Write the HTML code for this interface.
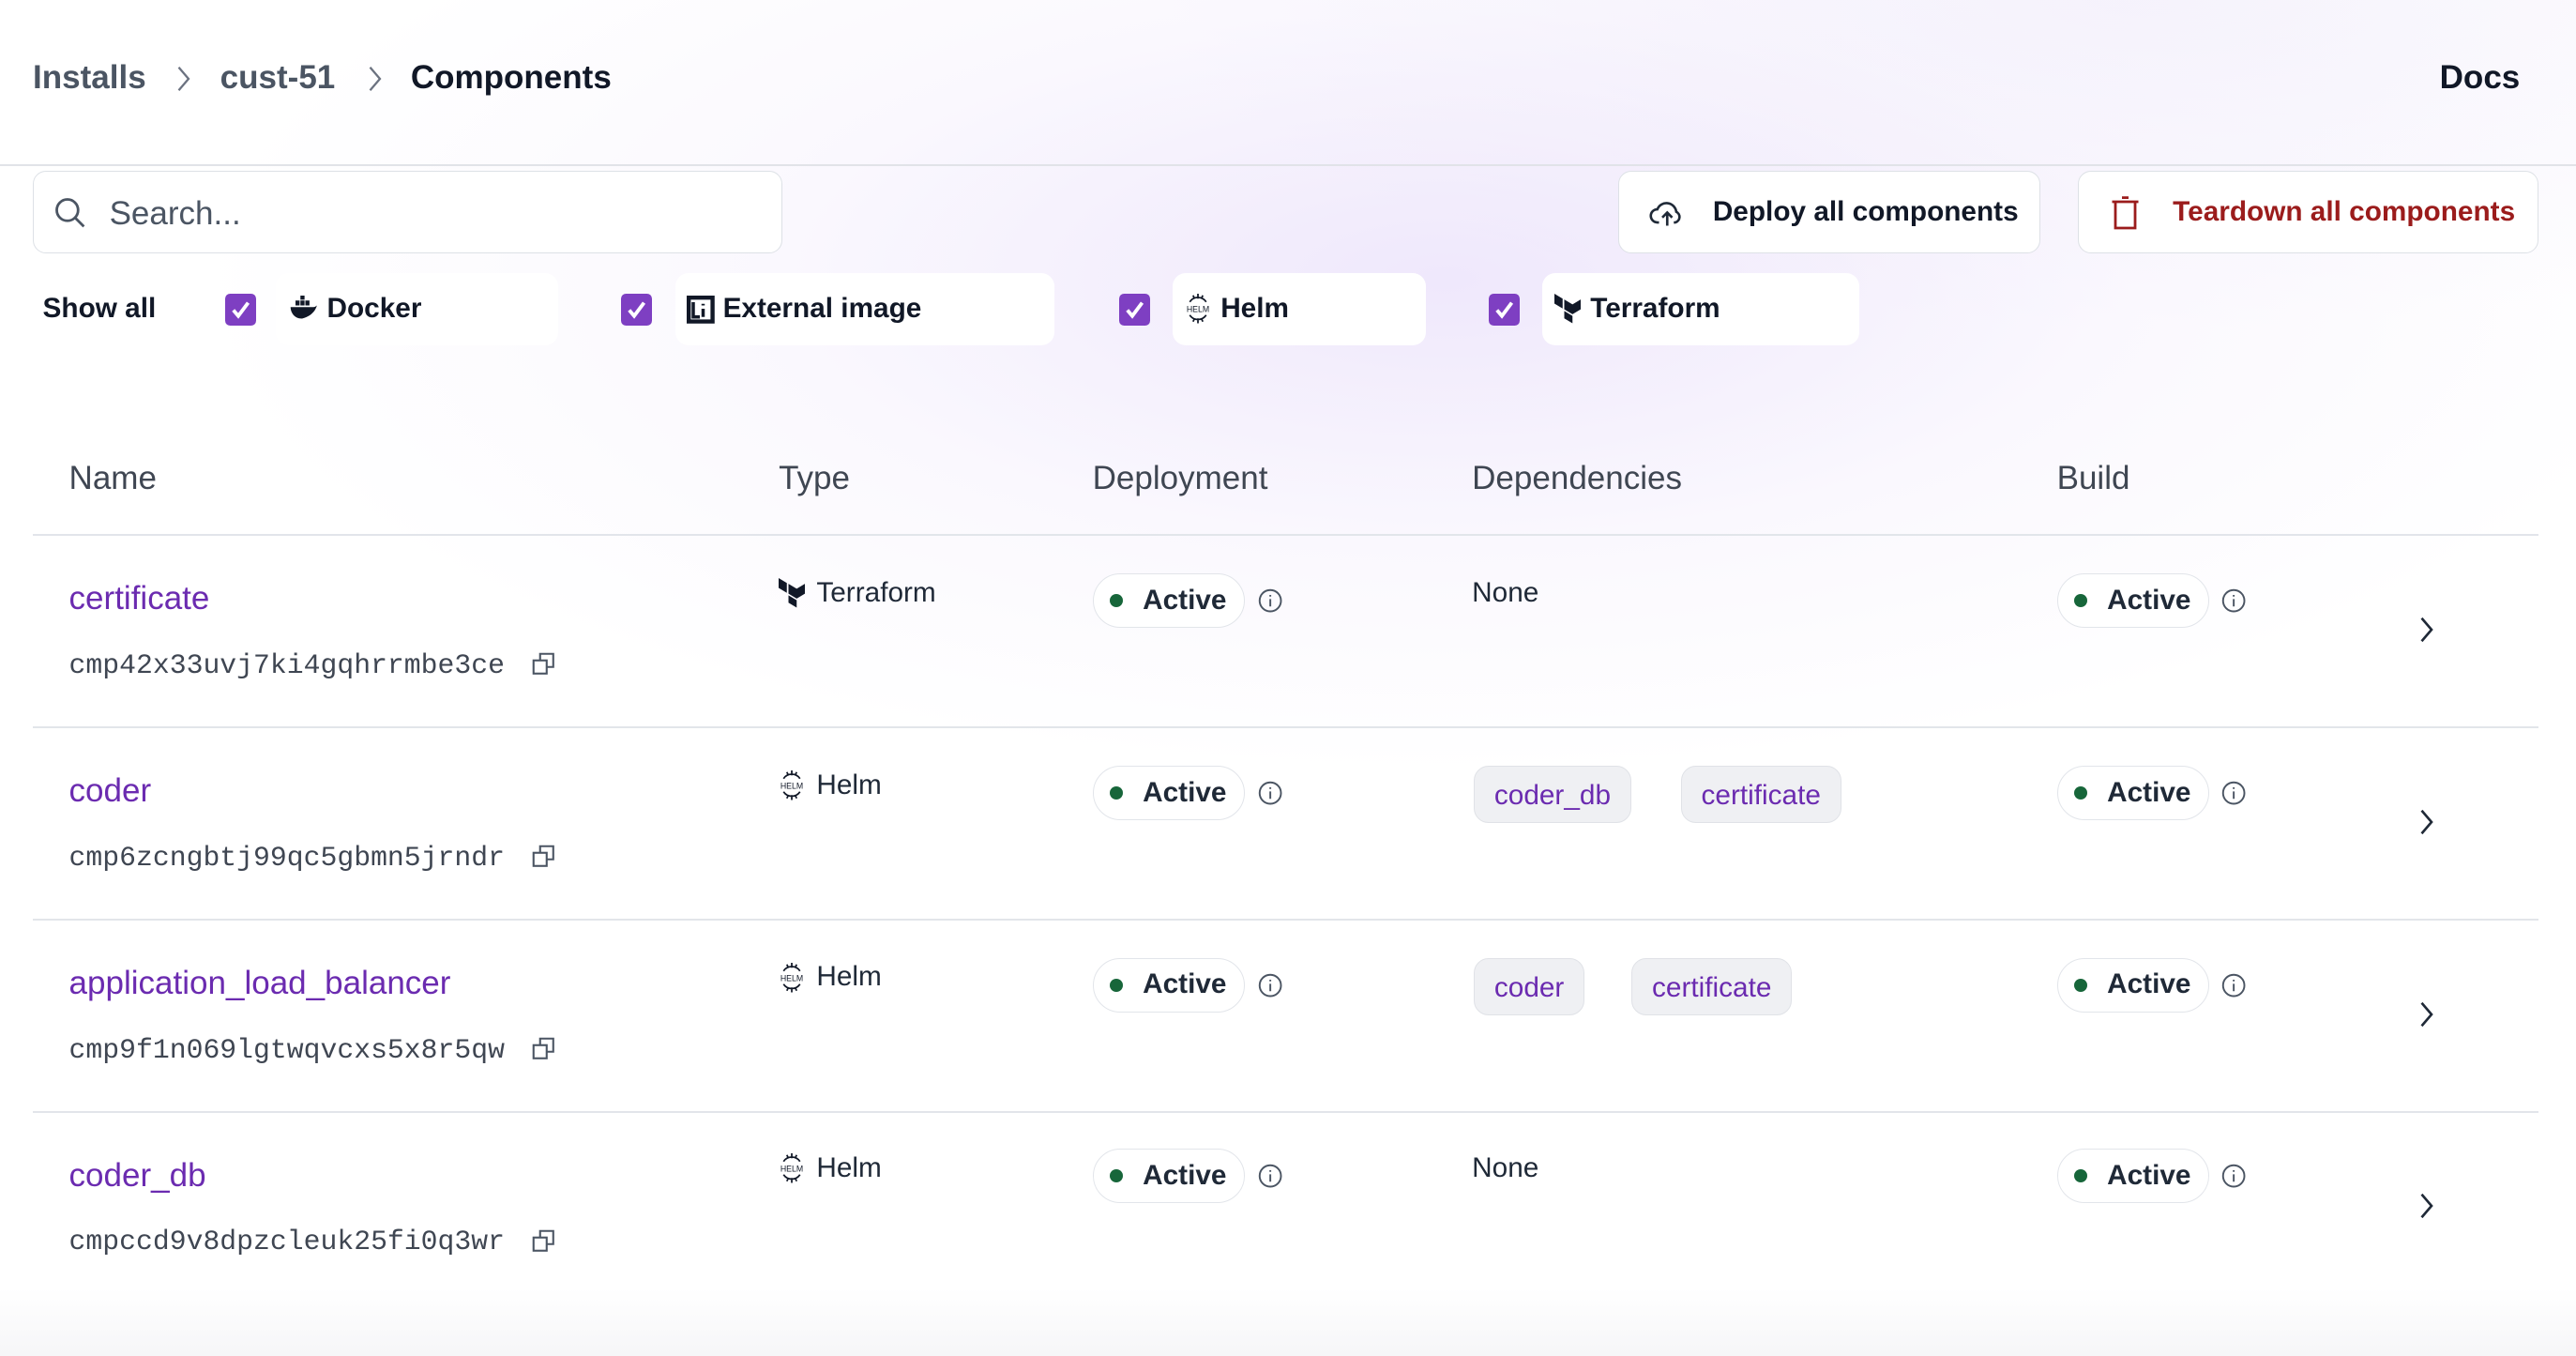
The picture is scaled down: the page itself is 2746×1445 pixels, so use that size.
<!DOCTYPE html>
<html><head><meta charset="utf-8">
<style>
html,body{margin:0;padding:0;}
body{width:2746px;height:1444px;overflow:hidden;background:#fff;font-family:"Liberation Sans",sans-serif;}
#w{position:relative;width:1568px;height:825px;zoom:1.75128;overflow:hidden;
background:
radial-gradient(ellipse 760px 300px at 880px 170px, rgba(232,222,250,0.7), rgba(242,236,252,0.35) 55%, rgba(255,255,255,0) 100%),
radial-gradient(ellipse 600px 200px at 1300px 0px, rgba(240,236,250,0.6), rgba(255,255,255,0) 100%),
linear-gradient(180deg,#fff 0,#fff 95%,#f6f6f8 100%);}
.a{position:absolute;white-space:nowrap;}
.bc{font-size:20px;font-weight:bold;color:#4b5563;top:36px;}
.hr{position:absolute;left:20px;width:1525px;height:1px;background:#e2e5ea;}
.box{position:absolute;background:#fff;border:1px solid #dde1e6;border-radius:8px;box-sizing:border-box;}
.chip{position:absolute;background:#fff;border-radius:8px;top:166px;height:44px;}
.cb{position:absolute;top:179px;width:19px;height:19px;background:#7e3fc2;border-radius:3px;}
.fl{position:absolute;top:178px;font-size:17px;font-weight:bold;color:#111827;}
.th{position:absolute;top:280px;font-size:20px;color:#3f4652;}
.nm{font-size:20px;color:#6b2bb0;}
.id{font-family:"Liberation Mono",monospace;font-size:17px;color:#3f4652;}
.ty{font-size:17px;color:#1f2937;}
.pill{position:absolute;width:93px;height:33px;border:1px solid #e2e5ea;border-radius:17px;box-sizing:border-box;background:#fff;}
.pill i{position:absolute;left:10px;top:12px;width:8px;height:8px;border-radius:50%;background:#17663a;}
.pill span{position:absolute;left:30px;top:6px;font-size:17px;color:#1f2937;font-weight:bold;}
.dep{position:absolute;height:35px;background:#eff0f3;border:1px solid #e0e2e7;border-radius:9px;box-sizing:border-box;font-size:17px;color:#6b2bb0;padding:8px 12px 0;}
</style></head><body><div id="w">
<div class="a bc" style="left:20px">Installs</div>
<svg class="a" style="left:107px;top:40px" width="10" height="16" viewBox="0 0 10 16" fill="none" stroke="#6b7280" stroke-width="1.3"><path d="M2 1l6 7-6 7"/></svg>
<div class="a bc" style="left:134px">cust-51</div>
<svg class="a" style="left:223px;top:40px" width="10" height="16" viewBox="0 0 10 16" fill="none" stroke="#6b7280" stroke-width="1.3"><path d="M2 1l6 7-6 7"/></svg>
<div class="a bc" style="left:250px;color:#111827">Components</div>
<div class="a bc" style="left:1485px;color:#111827">Docs</div>
<div style="position:absolute;left:0;top:100px;width:1568px;height:1px;background:#e1e3e8"></div>

<div class="box" style="left:20px;top:104px;width:456px;height:50px">
<svg style="position:absolute;left:12px;top:15px" width="20" height="20" viewBox="0 0 20 20" fill="none" stroke="#4b5563" stroke-width="1.6"><circle cx="8.5" cy="8.5" r="6.5"/><path d="M13.5 13.5l5 5"/></svg>
<div class="a" style="left:46px;top:14px;font-size:20px;color:#4b5563">Search...</div></div>

<div class="box" style="left:985px;top:104px;width:257px;height:50px">
<svg style="position:absolute;left:18px;top:15px" width="22" height="20" viewBox="0 0 22 20" fill="none" stroke="#1f2937" stroke-width="1.5"><path d="M6 16H5a4 4 0 0 1 0-8 6 6 0 0 1 11.5 1.5A3.5 3.5 0 0 1 16 16h-1"/><path d="M11 18V10M8 13l3-3 3 3"/></svg>
<div class="a" style="left:57px;top:15px;font-size:17px;font-weight:bold;color:#111827">Deploy all components</div></div>
<div class="box" style="left:1265px;top:104px;width:280px;height:50px">
<svg style="position:absolute;left:18px;top:14px" width="20" height="22" viewBox="0 0 20 22" fill="none" stroke="#9b1c1c" stroke-width="1.6"><path d="M2 4h16M8 1.5h4M4 4v16h12V4"/></svg>
<div class="a" style="left:57px;top:15px;font-size:17px;font-weight:bold;color:#9b1c1c">Teardown all components</div></div>

<div class="fl" style="left:26px">Show all</div>
<div class="cb" style="left:137px"></div><svg class="a" style="left:137px;top:179px" width="19" height="19"><path d="M5 10l3 3.5 6-8" fill="none" stroke="#fff" stroke-width="2.2"/></svg>
<div class="chip" style="left:168px;width:172px"></div>
<svg class="a" style="left:176px;top:180px" width="18" height="15" viewBox="0 0 18 15"><path d="M1 7h14c1 0 2-1 2-1s-1 6-9 8C3 14 1 10 1 7z" fill="#111827"/><rect x="4" y="3" width="2.5" height="3" fill="#111827"/><rect x="7" y="3" width="2.5" height="3" fill="#111827"/><rect x="10" y="3" width="2.5" height="3" fill="#111827"/><rect x="7" y="0" width="2.5" height="2.5" fill="#111827"/></svg>
<div class="fl" style="left:199px">Docker</div>
<div class="cb" style="left:378px"></div><svg class="a" style="left:378px;top:179px" width="19" height="19"><path d="M5 10l3 3.5 6-8" fill="none" stroke="#fff" stroke-width="2.2"/></svg>
<div class="chip" style="left:411px;width:231px"></div>
<svg class="a" style="left:418px;top:180px" width="17" height="17" viewBox="0 0 17 17"><rect x="0" y="0" width="17" height="17" fill="#111827"/><rect x="2.5" y="2.5" width="12" height="12" fill="#fff"/><path d="M4 4v9h4M10 5v1M10 8v5" stroke="#111827" stroke-width="2" fill="none"/></svg>
<div class="fl" style="left:440px">External image</div>
<div class="cb" style="left:681px"></div><svg class="a" style="left:681px;top:179px" width="19" height="19"><path d="M5 10l3 3.5 6-8" fill="none" stroke="#fff" stroke-width="2.2"/></svg>
<div class="chip" style="left:714px;width:154px"></div>
<svg class="a" style="left:721px;top:179px" width="16" height="18" viewBox="0 0 16 18" fill="none" stroke="#111827" stroke-width="1"><path d="M3 5a6 6 0 0 1 10 0M3 13a6 6 0 0 0 10 0M8 0v3M5 1l1 2M11 1l-1 2M8 18v-3M5 17l1-2M11 17l-1-2"/><text x="8" y="11" font-size="5" text-anchor="middle" fill="#111827" stroke="none" font-family="Liberation Sans">HELM</text></svg>
<div class="fl" style="left:743px">Helm</div>
<div class="cb" style="left:906px"></div><svg class="a" style="left:906px;top:179px" width="19" height="19"><path d="M5 10l3 3.5 6-8" fill="none" stroke="#fff" stroke-width="2.2"/></svg>
<div class="chip" style="left:939px;width:193px"></div>
<svg class="a" style="left:946px;top:179px" width="16" height="18" viewBox="0 0 16 18"><path d="M0 0l5 3v6L0 6zM6 3.5l5 3v6l-5-3zM11 6.5l5-3v6l-5 3zM6 10.5l5 3v4.5l-5-3z" fill="#111827"/></svg>
<div class="fl" style="left:968px">Terraform</div>

<div class="th" style="left:42px">Name</div>
<div class="th" style="left:474px">Type</div>
<div class="th" style="left:665px">Deployment</div>
<div class="th" style="left:896px">Dependencies</div>
<div class="th" style="left:1252px">Build</div>
<div class="hr" style="top:325px"></div>
<div class="hr" style="top:442px"></div>
<div class="hr" style="top:559px"></div>
<div class="hr" style="top:676px"></div>

<div class="a nm" style="left:42px;top:353px">certificate</div>
<div class="a id" style="left:42px;top:395px">cmp42x33uvj7ki4gqhrrmbe3ce</div>
<div class="a nm" style="left:42px;top:470px">coder</div>
<div class="a id" style="left:42px;top:512px">cmp6zcngbtj99qc5gbmn5jrndr</div>
<div class="a nm" style="left:42px;top:587px">application_load_balancer</div>
<div class="a id" style="left:42px;top:629px">cmp9f1n069lgtwqvcxs5x8r5qw</div>
<div class="a nm" style="left:42px;top:704px">coder_db</div>
<div class="a id" style="left:42px;top:746px">cmpccd9v8dpzcleuk25fi0q3wr</div>

<svg class="a" style="left:324px;top:397px" width="14" height="14" viewBox="0 0 14 14" fill="none" stroke="#4b5563" stroke-width="1.2"><rect x="1" y="5" width="8" height="8"/><path d="M5 5V1h8v8H9"/></svg>
<svg class="a" style="left:324px;top:514px" width="14" height="14" viewBox="0 0 14 14" fill="none" stroke="#4b5563" stroke-width="1.2"><rect x="1" y="5" width="8" height="8"/><path d="M5 5V1h8v8H9"/></svg>
<svg class="a" style="left:324px;top:631px" width="14" height="14" viewBox="0 0 14 14" fill="none" stroke="#4b5563" stroke-width="1.2"><rect x="1" y="5" width="8" height="8"/><path d="M5 5V1h8v8H9"/></svg>
<svg class="a" style="left:324px;top:748px" width="14" height="14" viewBox="0 0 14 14" fill="none" stroke="#4b5563" stroke-width="1.2"><rect x="1" y="5" width="8" height="8"/><path d="M5 5V1h8v8H9"/></svg>

<svg class="a" style="left:474px;top:352px" width="16" height="18" viewBox="0 0 16 18"><path d="M0 0l5 3v6L0 6zM6 3.5l5 3v6l-5-3zM11 6.5l5-3v6l-5 3zM6 10.5l5 3v4.5l-5-3z" fill="#111827"/></svg>
<div class="a ty" style="left:497px;top:351px">Terraform</div>
<svg class="a" style="left:474px;top:469px" width="16" height="18" viewBox="0 0 16 18" fill="none" stroke="#111827" stroke-width="1"><path d="M3 5a6 6 0 0 1 10 0M3 13a6 6 0 0 0 10 0M8 0v3M5 1l1 2M11 1l-1 2M8 18v-3M5 17l1-2M11 17l-1-2"/><text x="8" y="11" font-size="5" text-anchor="middle" fill="#111827" stroke="none">HELM</text></svg>
<div class="a ty" style="left:497px;top:468px">Helm</div>
<svg class="a" style="left:474px;top:586px" width="16" height="18" viewBox="0 0 16 18" fill="none" stroke="#111827" stroke-width="1"><path d="M3 5a6 6 0 0 1 10 0M3 13a6 6 0 0 0 10 0M8 0v3M5 1l1 2M11 1l-1 2M8 18v-3M5 17l1-2M11 17l-1-2"/><text x="8" y="11" font-size="5" text-anchor="middle" fill="#111827" stroke="none">HELM</text></svg>
<div class="a ty" style="left:497px;top:585px">Helm</div>
<svg class="a" style="left:474px;top:702px" width="16" height="18" viewBox="0 0 16 18" fill="none" stroke="#111827" stroke-width="1"><path d="M3 5a6 6 0 0 1 10 0M3 13a6 6 0 0 0 10 0M8 0v3M5 1l1 2M11 1l-1 2M8 18v-3M5 17l1-2M11 17l-1-2"/><text x="8" y="11" font-size="5" text-anchor="middle" fill="#111827" stroke="none">HELM</text></svg>
<div class="a ty" style="left:497px;top:701px">Helm</div>

<div class="pill" style="left:665px;top:349px"><i></i><span>Active</span></div>
<div class="pill" style="left:665px;top:466px"><i></i><span>Active</span></div>
<div class="pill" style="left:665px;top:583px"><i></i><span>Active</span></div>
<div class="pill" style="left:665px;top:699px"><i></i><span>Active</span></div>
<div class="pill" style="left:1252px;top:349px"><i></i><span>Active</span></div>
<div class="pill" style="left:1252px;top:466px"><i></i><span>Active</span></div>
<div class="pill" style="left:1252px;top:583px"><i></i><span>Active</span></div>
<div class="pill" style="left:1252px;top:699px"><i></i><span>Active</span></div>

<svg class="a" style="left:766px;top:358px" width="15" height="15" viewBox="0 0 15 15" fill="none" stroke="#4b5563" stroke-width="1.1"><circle cx="7.5" cy="7.5" r="6.5"/><path d="M7.5 6.5v4.5M7.5 4v1"/></svg>
<svg class="a" style="left:766px;top:475px" width="15" height="15" viewBox="0 0 15 15" fill="none" stroke="#4b5563" stroke-width="1.1"><circle cx="7.5" cy="7.5" r="6.5"/><path d="M7.5 6.5v4.5M7.5 4v1"/></svg>
<svg class="a" style="left:766px;top:592px" width="15" height="15" viewBox="0 0 15 15" fill="none" stroke="#4b5563" stroke-width="1.1"><circle cx="7.5" cy="7.5" r="6.5"/><path d="M7.5 6.5v4.5M7.5 4v1"/></svg>
<svg class="a" style="left:766px;top:708px" width="15" height="15" viewBox="0 0 15 15" fill="none" stroke="#4b5563" stroke-width="1.1"><circle cx="7.5" cy="7.5" r="6.5"/><path d="M7.5 6.5v4.5M7.5 4v1"/></svg>
<svg class="a" style="left:1352px;top:358px" width="15" height="15" viewBox="0 0 15 15" fill="none" stroke="#4b5563" stroke-width="1.1"><circle cx="7.5" cy="7.5" r="6.5"/><path d="M7.5 6.5v4.5M7.5 4v1"/></svg>
<svg class="a" style="left:1352px;top:475px" width="15" height="15" viewBox="0 0 15 15" fill="none" stroke="#4b5563" stroke-width="1.1"><circle cx="7.5" cy="7.5" r="6.5"/><path d="M7.5 6.5v4.5M7.5 4v1"/></svg>
<svg class="a" style="left:1352px;top:592px" width="15" height="15" viewBox="0 0 15 15" fill="none" stroke="#4b5563" stroke-width="1.1"><circle cx="7.5" cy="7.5" r="6.5"/><path d="M7.5 6.5v4.5M7.5 4v1"/></svg>
<svg class="a" style="left:1352px;top:708px" width="15" height="15" viewBox="0 0 15 15" fill="none" stroke="#4b5563" stroke-width="1.1"><circle cx="7.5" cy="7.5" r="6.5"/><path d="M7.5 6.5v4.5M7.5 4v1"/></svg>

<div class="a ty" style="left:896px;top:351px">None</div>
<div class="dep" style="left:897px;top:466px">coder_db</div>
<div class="dep" style="left:1023px;top:466px">certificate</div>
<div class="dep" style="left:897px;top:583px">coder</div>
<div class="dep" style="left:993px;top:583px">certificate</div>
<div class="a ty" style="left:896px;top:701px">None</div>

<svg class="a" style="left:1472px;top:375px" width="10" height="16" viewBox="0 0 10 16" fill="none" stroke="#1f2937" stroke-width="1.5"><path d="M2 1l6 7-6 7"/></svg>
<svg class="a" style="left:1472px;top:492px" width="10" height="16" viewBox="0 0 10 16" fill="none" stroke="#1f2937" stroke-width="1.5"><path d="M2 1l6 7-6 7"/></svg>
<svg class="a" style="left:1472px;top:609px" width="10" height="16" viewBox="0 0 10 16" fill="none" stroke="#1f2937" stroke-width="1.5"><path d="M2 1l6 7-6 7"/></svg>
<svg class="a" style="left:1472px;top:726px" width="10" height="16" viewBox="0 0 10 16" fill="none" stroke="#1f2937" stroke-width="1.5"><path d="M2 1l6 7-6 7"/></svg>
</div></body></html>
